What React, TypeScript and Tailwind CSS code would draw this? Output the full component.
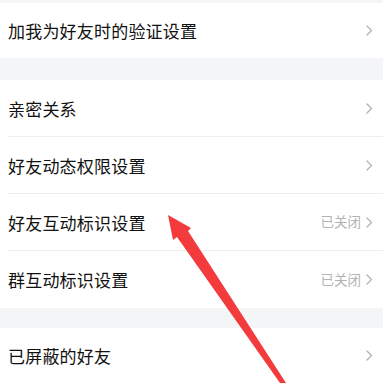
import React from "react";

type Row = { label: string; value?: string };

const Chevron = () => (
  <svg width="7" height="11" viewBox="0 0 7 11" className="shrink-0">
    <polyline
      points="1,1 5.5,5.5 1,10"
      fill="none"
      stroke="#b4b4b8"
      strokeWidth="1.4"
      strokeLinecap="round"
      strokeLinejoin="round"
    />
  </svg>
);

const Item = ({ row, h, last }: { row: Row; h: string; last?: boolean }) => (
  <div className="bg-white pl-2">
    <div className={`flex items-center pr-[10px] ${h} ${last ? "" : "border-b border-[#ececee]"}`}>
      <span className="flex-1 text-[17px] text-[#111111] leading-none tracking-[0.2px]">{row.label}</span>
      {row.value && <span className="mr-[5px] text-[13.5px] text-[#b3b3b3] leading-none">{row.value}</span>}
      <Chevron />
    </div>
  </div>
);

export default function App() {
  return (
    <div
      className="relative w-[383px] h-[383px] overflow-hidden bg-[#f4f5f7]"
      style={{ fontFamily: '"Noto Sans CJK SC", "Noto Sans", sans-serif' }}
    >
      <div className="h-[3px]" />
      <Item row={{ label: "加我为好友时的验证设置" }} h="h-[55px]" last />
      <div className="h-[22px]" />
      <Item row={{ label: "亲密关系" }} h="h-[57px]" />
      <Item row={{ label: "好友动态权限设置" }} h="h-[57px]" />
      <Item row={{ label: "好友互动标识设置", value: "已关闭" }} h="h-[57px]" />
      <Item row={{ label: "群互动标识设置", value: "已关闭" }} h="h-[57px]" last />
      <div className="h-[20px]" />
      <Item row={{ label: "已屏蔽的好友" }} h="h-[55px]" last />

      {/* red annotation arrow */}
      <svg className="absolute left-0 top-0" width="383" height="383" viewBox="0 0 383 383">
        <polygon
          points="168,215 191,228 188,231 286,383 280,383 177,237 173,240"
          fill="#f33a3c"
        />
      </svg>
    </div>
  );
}
